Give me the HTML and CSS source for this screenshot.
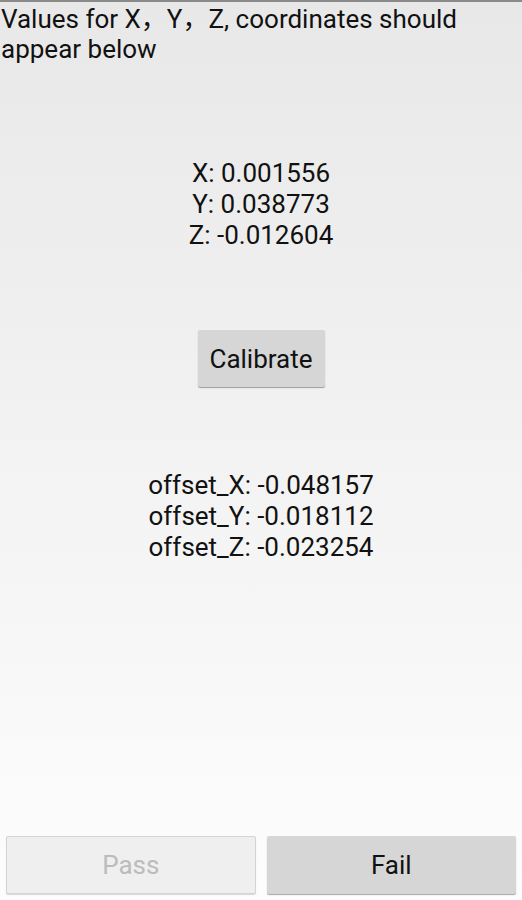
FILE: index.html
```html
<!DOCTYPE html>
<html lang="en">
<head>
  <meta charset="UTF-8">
  <meta name="viewport" content="width=device-width, initial-scale=1.0">
  <title>Accelerometer Test</title>
  <link rel="stylesheet" href="styles.css">
</head>
<body>
  <div class="screen">
    <p class="title">Values for X，Y，Z, coordinates should appear below</p>

    <div class="values">
      <div>X: 0.001556</div>
      <div>Y: 0.038773</div>
      <div>Z: -0.012604</div>
    </div>

    <button class="btn calibrate">Calibrate</button>

    <div class="values offsets">
      <div>offset_X: -0.048157</div>
      <div>offset_Y: -0.018112</div>
      <div>offset_Z: -0.023254</div>
    </div>

    <div class="actions">
      <button class="btn pass" disabled>Pass</button>
      <button class="btn fail">Fail</button>
    </div>
  </div>
</body>
</html>
```

FILE: styles.css
```css
body {
  margin: 0;
  font-family: Roboto, "Noto Sans CJK SC", sans-serif;
  color: #111;
}

.screen {
  height: 900px;
  box-sizing: border-box;
  border-top: 2px solid #8a8a8a;
  background: linear-gradient(to bottom, #e8e8e8, #fdfdfd);
  display: flex;
  flex-direction: column;
  align-items: center;
}

.title {
  align-self: stretch;
  margin: 0;
  padding: 2px 0 0 1px;
  font-size: 26px;
  line-height: 30px;
  color: #111;
}

.values {
  margin-top: 94px;
  text-align: center;
  font-size: 26px;
  line-height: 31px;
}

.btn {
  font-family: Roboto, "Noto Sans CJK SC", sans-serif;
  font-size: 26px;
  border: none;
  border-radius: 2px;
  background: #d6d6d6;
  color: #111;
  box-shadow: 0 1px 1px rgba(0, 0, 0, 0.35);
}

.calibrate {
  margin-top: 79px;
  width: 127px;
  height: 57px;
  padding: 0;
}

.offsets {
  margin-top: 83px;
}

.actions {
  margin-top: auto;
  align-self: stretch;
  display: flex;
  gap: 11px;
  padding: 0 6px 6px 6px;
}

.actions .btn {
  flex: 1 1 0;
  height: 58px;
  padding: 0;
  border: 1px solid transparent;
}

.actions .pass {
  background: #efefef;
  color: #bcbcbc;
  border-color: #d4d4d4;
  box-shadow: 0 1px 1px rgba(0, 0, 0, 0.15);
}
```
